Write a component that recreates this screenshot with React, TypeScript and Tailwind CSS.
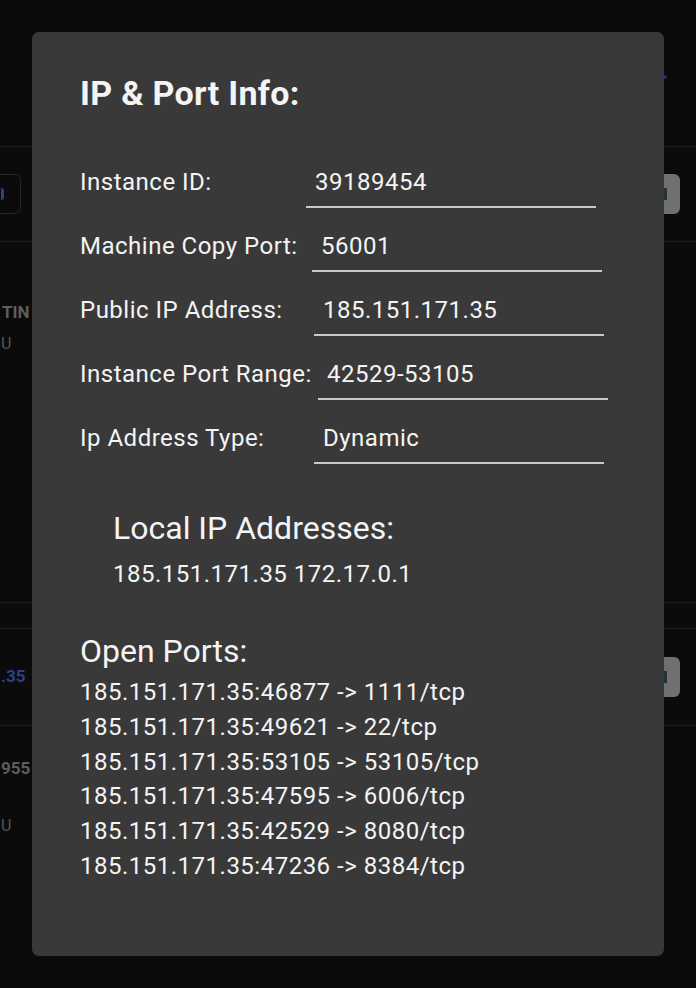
import React from "react";

const rows = [
  { label: "Instance ID:", value: "39189454", w: "w-[226px]" },
  { label: "Machine Copy Port:", value: "56001", w: "w-[232px]" },
  { label: "Public IP Address:", value: "185.151.171.35", w: "w-[234px]" },
  { label: "Instance Port Range:", value: "42529-53105", w: "w-[238px]" },
  { label: "Ip Address Type:", value: "Dynamic", w: "w-[234px]" },
];

const ports = [
  "185.151.171.35:46877 -> 1111/tcp",
  "185.151.171.35:49621 -> 22/tcp",
  "185.151.171.35:53105 -> 53105/tcp",
  "185.151.171.35:47595 -> 6006/tcp",
  "185.151.171.35:42529 -> 8080/tcp",
  "185.151.171.35:47236 -> 8384/tcp",
];

export default function App() {
  return (
    <div
      className="relative w-[696px] h-[988px] overflow-hidden bg-[#0b0b0b]"
      style={{ fontFamily: "Roboto, 'Liberation Sans', sans-serif" }}
    >
      {/* dimmed page behind the dialog */}
      <div className="flex flex-col w-full">
        <div className="h-[147px] border-b border-[#1c1c1c] flex justify-end">
          <div className="mt-[75px] mr-[29px] w-[4px] h-[4px] rounded-full bg-[#2a2a6a]" />
        </div>
        <div className="h-[95px] border-b border-[#1c1c1c] flex items-center justify-between">
          <div className="ml-[-20px] w-[41px] h-[40px] rounded-md border border-[#262626] flex items-center pl-[20px]">
            <div className="w-[3px] h-[12px] rounded-r-full bg-[#2c3f8c]" />
          </div>
          <div className="mr-[16px] w-[50px] h-[40px] rounded-md bg-[#707070] flex items-center justify-end pr-[13px]">
            <div className="w-[3px] h-[12px] bg-[#22323c]" />
          </div>
        </div>
        <div className="h-[361px] border-b border-[#1c1c1c] flex flex-col pt-[60px]">
          <div className="ml-[2px] text-[17px] font-bold text-[#5e5e5e] leading-[20px] whitespace-nowrap">
            TIN
          </div>
          <div className="ml-[1px] mt-[12px] text-[16px] text-[#555] leading-[20px]">U</div>
        </div>
        <div className="h-[26px] border-b border-[#1c1c1c]" />
        <div className="h-[97px] border-b border-[#1c1c1c] flex items-center justify-between">
          <div className="ml-[1px] text-[17px] font-bold text-[#2c3f8c] whitespace-nowrap">.35</div>
          <div className="mr-[16px] w-[50px] h-[40px] rounded-md bg-[#707070] flex items-center justify-end pr-[13px]">
            <div className="w-[3px] h-[12px] bg-[#22323c]" />
          </div>
        </div>
        <div className="flex flex-col pt-[32px]">
          <div className="ml-[1px] text-[17px] font-bold text-[#5e5e5e] leading-[20px] whitespace-nowrap">
            955
          </div>
          <div className="ml-[1px] mt-[38px] text-[16px] text-[#555] leading-[20px]">U</div>
        </div>
      </div>

      {/* dialog */}
      <div className="absolute left-[32px] top-[32px] w-[632px] h-[924px] rounded-[7px] bg-[#393939] pl-[48px] pt-[41px] text-[#f4f4f4]">
        <div className="text-[34px] font-bold leading-[40px] tracking-[0.3px]">IP &amp; Port Info:</div>
        <div className="mt-[53px] flex flex-col gap-[22px]">
          {rows.map((r) => (
            <div key={r.label} className="flex items-start">
              <div className={`${r.w} text-[24px] leading-[32px] tracking-[0.5px] whitespace-nowrap`}>{r.label}</div>
              <div className="w-[290px] h-[42px] border-b-2 border-[#c9c9c9] pl-[9px] text-[24px] leading-[32px] tracking-[0.5px]">
                {r.value}
              </div>
            </div>
          ))}
        </div>
        <div className="mt-[44px] pl-[33px] text-[32px] leading-[40px]">Local IP Addresses:</div>
        <div className="mt-[10px] pl-[33px] text-[24px] leading-[32px] tracking-[0.5px]">185.151.171.35 172.17.0.1</div>
        <div className="mt-[41px] text-[32px] leading-[40px]">Open Ports:</div>
        <div className="mt-[4px] flex flex-col">
          {ports.map((p) => (
            <div key={p} className="text-[24px] leading-[34.8px] tracking-[0.5px] whitespace-nowrap">
              {p}
            </div>
          ))}
        </div>
      </div>
    </div>
  );
}
